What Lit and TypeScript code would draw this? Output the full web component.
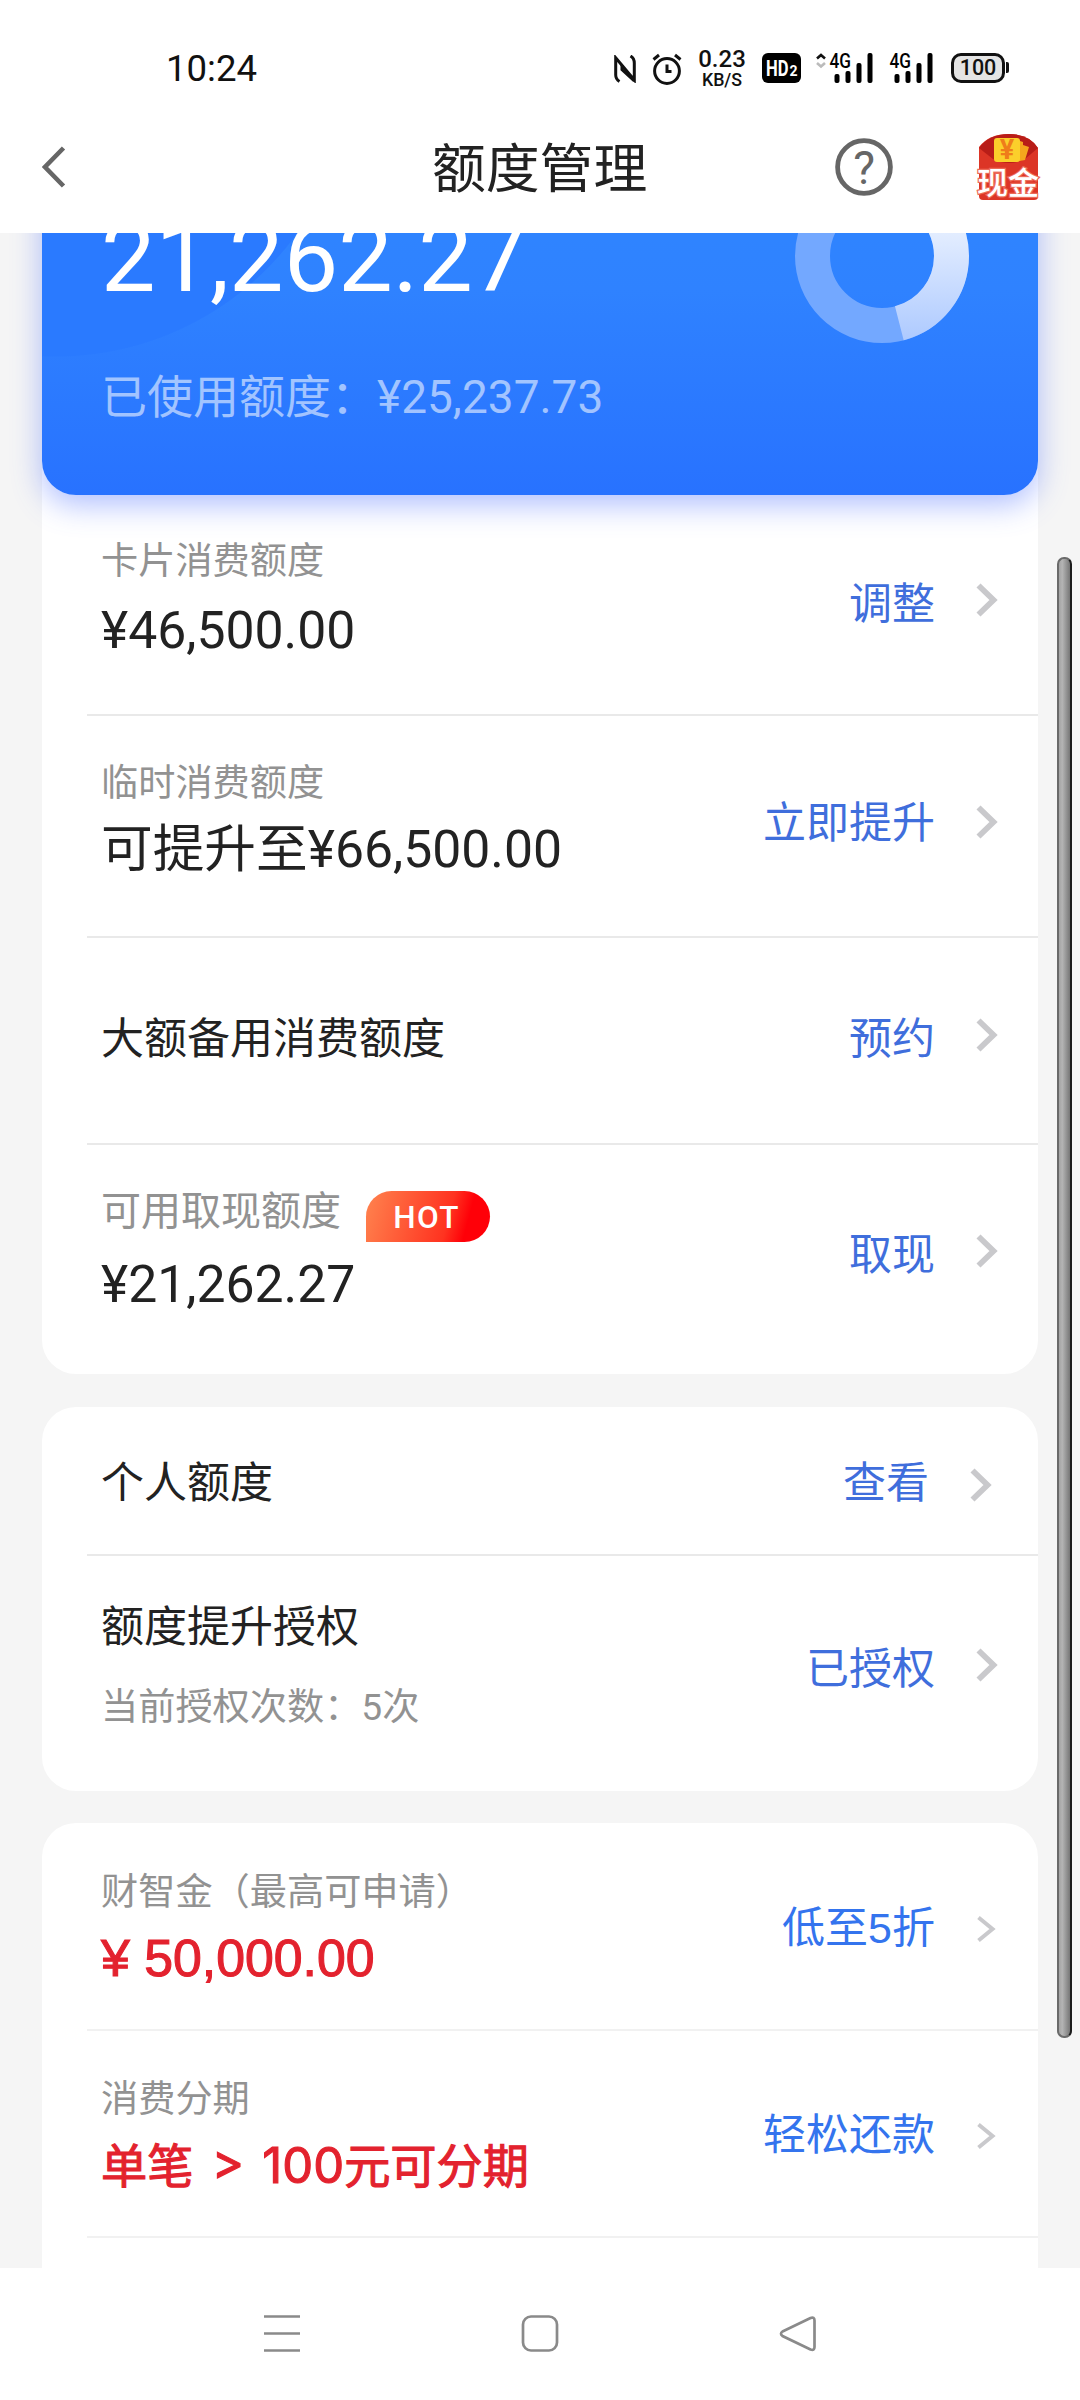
import { LitElement, html, css, svg, nothing } from "lit";
import { customElement, property } from "lit/decorators.js";
import { classMap } from "lit/directives/class-map.js";

interface LimitRow {
    kind: string;
    label?: string;
    hot?: boolean;
    title?: string;
    value?: string;
    note?: string;
    promo?: unknown;
    action: string;
    thin?: boolean;
}

const cardRows: LimitRow[] = [
    { kind: "card-limit", label: "卡片消费额度", value: "¥46,500.00", action: "调整" },
    { kind: "temp-limit", label: "临时消费额度", value: "可提升至¥66,500.00", action: "立即提升" },
    { kind: "reserve-limit", title: "大额备用消费额度", action: "预约" },
    { kind: "cash-limit", label: "可用取现额度", hot: true, value: "¥21,262.27", action: "取现" },
];

const personalRows: LimitRow[] = [
    { kind: "personal", title: "个人额度", action: "查看" },
    { kind: "grant", title: "额度提升授权", note: "当前授权次数：5次", action: "已授权" },
];

const promoRows: LimitRow[] = [
    {
        kind: "cash-loan",
        label: "财智金（最高可申请）",
        promo: html`<span class="amount">¥ 50,000.00</span>`,
        action: "低至5折",
        thin: true,
    },
    {
        kind: "instalment",
        label: "消费分期",
        promo: html`<span class="mixed">单笔<span class="latin"> &gt; 100</span>元可分期</span>`,
        action: "轻松还款",
        thin: true,
    },
];

@customElement("status-bar")
export class StatusBar extends LitElement {
    signal(arrows: boolean) {
        return html`<svg class=${arrows ? "signal wide" : "signal"} viewBox=${arrows ? "0 0 58 32" : "14 0 44 32"}>
            ${arrows
                ? svg`<path d="M2 6.5L6 3L10 6.5" fill="none" stroke="#111" stroke-width="2.6"/>
                    <path d="M2 11L6 14.5L10 11" fill="none" stroke="#bbb" stroke-width="2.6"/>`
                : nothing}
            <text x="14.500" y="15.500" textLength="21.500" lengthAdjust="spacingAndGlyphs">4G</text>
            <rect x="19.500" y="22" width="5" height="9" rx="2" />
            <rect x="30.500" y="19" width="5" height="12" rx="2" />
            <rect x="41.500" y="11" width="5" height="20" rx="2" />
            <rect x="52.500" y="1" width="5" height="30" rx="2" />
        </svg>`;
    }

    render() {
        return html`
            <span class="time">10:24</span>
            <div class="icons">
                <svg class="nfc" viewBox="0 0 22 28">
                    <path d="M5.500 26.500C3 25 1.700 23 1.700 20V2.800L20.300 25V8C20.300 5 19 2.500 16.500 1" />
                    <path d="M8 10V14.500L20.300 26" />
                </svg>
                <svg class="alarm" viewBox="0 0 30 32">
                    <circle cx="15" cy="18" r="12.400" />
                    <path d="M1.500 6.500L7 2M28.500 6.500L23 2M15 11.500V18.500H19.500" />
                </svg>
                <div class="speed">
                    <span class="rate">0.23</span>
                    <span class="unit">KB/S</span>
                </div>
                <svg class="hd" viewBox="0 0 39 30">
                    <rect width="39" height="30" rx="6" />
                    <text x="4" y="23" class="big" textLength="22.500" lengthAdjust="spacingAndGlyphs">HD</text>
                    <text x="27.500" y="23" class="two">2</text>
                </svg>
                ${this.signal(true)} ${this.signal(false)}
                <div class="battery"><span class="level">100</span></div>
                <div class="nub"></div>
            </div>
        `;
    }

    static styles = css`
        :host {
            display: flex;
            height: 96px;
            align-items: flex-start;
            background: #fff;
            color: #111;
            font-family: Roboto, "Noto Sans CJK SC", sans-serif;
        }

        .time {
            margin: 48px 0 0 166px;
            width: 448px;
            font-size: 36.6px;
            line-height: 42px;
        }

        .icons {
            display: flex;
            align-items: flex-start;
            padding-top: 52px;
        }

        .nfc {
            width: 22px;
            height: 28px;
            margin-top: 3px;
        }

        .nfc path,
        .alarm path,
        .alarm circle {
            fill: none;
            stroke: #111;
            stroke-width: 3;
        }

        .alarm {
            width: 30px;
            height: 32px;
            margin: 1px 0 0 16px;
        }

        .speed {
            display: flex;
            flex-direction: column;
            align-items: center;
            width: 50px;
            margin: -7px 0 0 15px;
            font-weight: 500;
        }

        .rate {
            font-size: 24px;
            line-height: 28px;
        }

        .unit {
            margin-top: -3px;
            font-size: 17.8px;
            line-height: 20px;
        }

        .hd {
            width: 39px;
            height: 30px;
            margin: 1px 0 0 15px;
        }

        .hd text {
            fill: #fff;
            font-weight: 700;
        }

        .hd .big {
            font-size: 22.5px;
        }

        .hd .two {
            font-size: 14px;
        }

        .signal {
            width: 44px;
            height: 32px;
            margin-left: 16px;
            fill: #000;
            overflow: visible;
        }

        .signal.wide {
            width: 58px;
            margin-left: 14px;
        }

        .signal text {
            font-size: 20.5px;
            font-weight: 500;
        }

        .battery {
            box-sizing: border-box;
            width: 54px;
            height: 30px;
            margin: 1px 0 0 18px;
            border: 3px solid #111;
            border-radius: 10px;
            background: #e4e4e4;
            text-align: center;
        }

        .level {
            display: block;
            font-size: 21.5px;
            font-weight: 500;
            line-height: 24px;
        }

        .nub {
            width: 3px;
            height: 11px;
            margin: 10px 0 0 1px;
            border-radius: 0 2px 2px 0;
            background: #111;
        }
    `;
}

@customElement("title-bar")
export class TitleBar extends LitElement {
    render() {
        return html`
            <svg class="back" viewBox="0 0 24 42">
                <path d="M21.500 2L3 21L21.500 40" />
            </svg>
            <h1 class="title">额度管理</h1>
            <svg class="help" viewBox="0 0 58 58">
                <circle cx="29" cy="29" r="26.400" />
                <text x="29" y="45.500">?</text>
            </svg>
            <svg class="packet" viewBox="0 0 66 68">
                <path d="M4 14Q14 1 34 1T63 15V64Q63 67 59 67H8Q4 67 4 63Z" fill="#dc3526" />
                <path d="M4 15Q14 1 34 1T63 15L50 26Q34 34 18 26Z" fill="#b81d18" />
                <path d="M42 7L48 9V12L54 14L50 27L40 29Z" fill="#f5a51d" />
                <rect x="19" y="5" width="26" height="24" rx="3" fill="#fbcf2b" />
                <text class="yen" x="32" y="26">¥</text>
                <text class="cash" x="33" y="60.500">现金</text>
            </svg>
        `;
    }

    static styles = css`
        :host {
            display: grid;
            grid-template-columns: 42px 24px 1fr 58px 82px 66px 39px;
            height: 137px;
            background: #fff;
            font-family: Roboto, "Noto Sans CJK SC", sans-serif;
        }

        .back {
            grid-column: 2;
            width: 24px;
            height: 42px;
            margin-top: 50px;
            fill: none;
            stroke: #666;
            stroke-width: 4.6;
        }

        .title {
            margin: 0;
            padding: 39px 0 0 366px;
            color: #222;
            font-size: 53.8px;
            font-weight: 400;
            line-height: 70px;
            white-space: nowrap;
        }

        .help {
            width: 58px;
            height: 58px;
            margin-top: 42px;
        }

        .help circle {
            fill: none;
            stroke: #666;
            stroke-width: 4.8;
        }

        .help text {
            fill: #666;
            font-size: 46px;
            text-anchor: middle;
        }

        .packet {
            grid-column: 6;
            width: 66px;
            height: 68px;
            margin-top: 37px;
            overflow: visible;
        }

        .yen {
            fill: #ef7d1a;
            font-size: 27px;
            font-weight: 700;
            text-anchor: middle;
        }

        .cash {
            fill: #fff;
            stroke: #ec6a58;
            stroke-width: 2.5;
            paint-order: stroke;
            font-family: "Noto Sans CJK SC", sans-serif;
            font-size: 31px;
            font-weight: 500;
            text-anchor: middle;
        }
    `;
}

@customElement("limit-hero")
export class LimitHero extends LitElement {
    @property() available = "21,262.27";
    @property() used = "¥25,237.73";
    @property({ type: Number }) ratio = 0.459;

    render() {
        const length = 2 * Math.PI * 69.5;
        return html`
            <div class="figures">
                <span class="available">${this.available}</span>
                <span class="used">已使用额度：${this.used}</span>
            </div>
            <svg class="donut" viewBox="0 0 174 174">
                <defs>
                    <!-- the arc is rotated, so the x axis runs bottom to top -->
                    <linearGradient id="free" gradientUnits="userSpaceOnUse" x1="0" y1="0" x2="174" y2="0">
                        <stop offset="0" stop-color="#acc9ff" />
                        <stop offset="0.600" stop-color="#e0ebff" />
                        <stop offset="1" stop-color="#fff" />
                    </linearGradient>
                </defs>
                <circle cx="87" cy="87" r="69.500" stroke="#73a8ff" />
                <circle
                    cx="87"
                    cy="87"
                    r="69.500"
                    stroke="url(#free)"
                    stroke-dasharray="${length * this.ratio} ${length}"
                    transform="rotate(-90 87 87)"
                />
            </svg>
        `;
    }

    static styles = css`
        :host {
            display: flex;
            justify-content: space-between;
            box-sizing: border-box;
            height: 342px;
            padding: 15px 69px 0 59px;
            border-radius: 0 0 34px 34px;
            background:
                radial-gradient(circle 298px at 14px -94px, #2a7aff 297px, transparent 298px),
                linear-gradient(#2f86ff, #2f82ff 40%, #2872ff);
            box-shadow: 0 10px 30px rgba(70, 105, 255, 0.42);
        }

        .figures {
            display: flex;
            flex-direction: column;
            color: #fff;
            white-space: nowrap;
        }

        .available {
            font-size: 97px;
            line-height: 110px;
            margin-top: 35px;
        }

        .used {
            margin-top: 54px;
            color: rgba(255, 255, 255, 0.56);
            font-size: 46px;
            line-height: 60px;
        }

        .donut {
            width: 174px;
            height: 174px;
            margin-top: 1px;
            fill: none;
            stroke-width: 35;
        }
    `;
}

@customElement("limit-row")
export class LimitRowElement extends LitElement {
    @property({ attribute: false }) row!: LimitRow;

    render() {
        const { kind, label, hot, title, value, note, promo, action, thin } = this.row;
        return html`
            <div class=${classMap({ row: true, [kind]: true })}>
                <div class="info">
                    ${label
                        ? html`<div class="heading">
                              <span class="label">${label}</span>
                              ${hot ? html`<span class="hot">HOT</span>` : nothing}
                          </div>`
                        : nothing}
                    ${title ? html`<span class="title">${title}</span>` : nothing}
                    ${value ? html`<span class="value">${value}</span>` : nothing}
                    ${promo ? html`<span class="promo">${promo}</span>` : nothing}
                    ${note ? html`<span class="note">${note}</span>` : nothing}
                </div>
                <div class="action">
                    <span class=${thin ? "link bright" : "link"}>${action}</span>
                    ${thin
                        ? html`<svg class="chevron thin" viewBox="0 0 22 34">
                              <path d="M2.500 5.500L16.500 17L2.500 28.500" />
                          </svg>`
                        : html`<svg class="chevron" viewBox="0 0 22 34">
                              <path d="M2.500 2.500L17.500 17L2.500 31.500" />
                          </svg>`}
                </div>
            </div>
        `;
    }

    static styles = css`
        :host {
            display: block;
        }

        :host(:not([last])) .row {
            border-bottom: 2px solid var(--line, #e9e9e9);
        }

        .row {
            display: flex;
            justify-content: space-between;
            box-sizing: border-box;
            height: var(--height);
            margin-left: 45px;
            padding: 0 40px 0 14px;
            white-space: nowrap;
        }

        .info {
            display: flex;
            flex-direction: column;
            align-items: flex-start;
            gap: var(--gap);
            padding-top: var(--top);
        }

        .card-limit {
            --height: 221px;
            --top: 44px;
            --gap: 18px;
            --action: 79px;
            --chevron: -9px;
        }

        .temp-limit {
            --height: 222px;
            --top: 45px;
            --gap: 15px;
            --action: 77px;
            --chevron: -2px;
        }

        .reserve-limit {
            --height: 207px;
            --top: 76px;
            --action: 71px;
            --chevron: -8px;
        }

        .cash-limit {
            --height: 229px;
            --top: 45px;
            --gap: 21px;
            --action: 80px;
            --chevron: -8px;
        }

        .personal {
            --height: 149px;
            --top: 51px;
            --action: 46px;
            --chevron: 4px;
            padding-right: 46px;
        }

        .grant {
            --height: 235px;
            --top: 46px;
            --gap: 33px;
            --action: 83px;
            --chevron: -8px;
        }

        .cash-loan {
            --height: 208px;
            --top: 47px;
            --gap: 14px;
            --action: 75px;
            --chevron: 2px;
            --line: #f1f1f1;
        }

        .instalment {
            --height: 207px;
            --top: 46px;
            --gap: 15px;
            --action: 74px;
            --chevron: 2px;
            --line: #f1f1f1;
        }

        .heading {
            display: flex;
            height: 44px;
        }

        .label,
        .note {
            color: #929292;
            font-size: 37.2px;
            line-height: 44px;
        }

        .cash-limit .label {
            font-size: 40px;
        }

        .hot {
            box-sizing: border-box;
            width: 124px;
            height: 51px;
            margin: 1px 0 0 25px;
            padding-right: 3px;
            border-radius: 26px 26px 26px 0;
            background: linear-gradient(105deg, #ff7d4b 5%, #ff3320 65%, #ff0008 80%);
            color: #fff;
            font-size: 31.5px;
            font-weight: 500;
            line-height: 53px;
            letter-spacing: 1.3px;
            text-align: center;
        }

        .title {
            color: #222;
            font-size: 43px;
            line-height: 50px;
        }

        .value {
            color: #222;
            font-size: 51.7px;
            line-height: 60px;
        }

        .promo {
            color: #e3222e;
            line-height: 60px;
            -webkit-text-stroke: 1.1px #e3222e;
        }

        .amount {
            display: block;
            font-family: "Liberation Sans", sans-serif;
            font-size: 51.8px;
        }

        .mixed {
            display: block;
            font-family: Inter, "Noto Sans CJK SC", sans-serif;
            font-size: 46.2px;
        }

        .latin {
            font-size: 49px;
            word-spacing: 4.5px;
        }

        .action {
            display: flex;
            align-items: center;
            gap: 41px;
            height: 60px;
            padding-top: var(--action);
        }

        .link {
            color: #3f6edc;
            font-size: 43px;
            line-height: 60px;
        }

        .bright {
            color: #3474ee;
            font-family: "Liberation Sans", "Noto Sans CJK SC", sans-serif;
        }

        .chevron {
            width: 22px;
            height: 34px;
            margin-top: var(--chevron);
            fill: none;
            stroke: #c9c9cc;
            stroke-width: 5.8;
        }

        .thin {
            stroke-width: 4;
        }
    `;
}

@customElement("nav-bar")
export class NavBar extends LitElement {
    render() {
        return html`
            <svg viewBox="0 0 40 40"><path d="M2 3.500H38M2 20.500H38M2 37.500H38" /></svg>
            <svg viewBox="0 0 40 40"><rect x="3" y="3.500" width="34" height="34" rx="8" /></svg>
            <svg viewBox="0 0 40 40">
                <path d="M4.500 18.500L32.500 5Q36.500 3.500 36.500 7.500V34Q36.500 38 32.500 36.500L4.500 23Q1.500 20.500 4.500 18.500Z" />
            </svg>
        `;
    }

    static styles = css`
        :host {
            display: flex;
            justify-content: space-between;
            box-sizing: border-box;
            height: 132px;
            padding: 45px 262px 0;
            background: #fff;
        }

        svg {
            width: 40px;
            height: 40px;
            fill: none;
            stroke: #8a8a8a;
            stroke-width: 2.7;
        }
    `;
}

@customElement("app-root")
export class AppRoot extends LitElement {
    rows(rows: LimitRow[], open = false) {
        return rows.map(
            (row, i) => html`<limit-row .row=${row} ?last=${!open && i === rows.length - 1}></limit-row>`
        );
    }

    render() {
        return html`
            <status-bar></status-bar>
            <title-bar></title-bar>
            <main class="content">
                <section class="card first">
                    <limit-hero></limit-hero>
                    ${this.rows(cardRows)}
                </section>
                <section class="card">${this.rows(personalRows)}</section>
                <section class="card rest">${this.rows(promoRows, true)}</section>
                <div class="scrollbar"></div>
            </main>
            <nav-bar></nav-bar>
        `;
    }

    static styles = css`
        :host {
            display: flex;
            flex-direction: column;
            width: 1080px;
            height: 2400px;
            overflow: hidden;
            background: #fff;
            font-family: Roboto, "Noto Sans CJK SC", sans-serif;
        }

        .content {
            position: relative;
            display: flex;
            flex-direction: column;
            gap: 33px;
            box-sizing: border-box;
            height: 2035px;
            padding: 0 42px;
            overflow: hidden;
            background: #f5f5f5;
        }

        .card {
            flex: none;
            border-radius: 34px;
            background: #fff;
        }

        .card.first {
            margin-top: -80px;
        }

        .card.rest {
            height: 480px;
            margin-top: -1px;
        }

        .scrollbar {
            position: absolute;
            top: 324px;
            right: 8px;
            box-sizing: border-box;
            width: 15px;
            height: 1481px;
            border: 2px solid #6a6a6a;
            border-right-color: #1c1c1c;
            border-radius: 7px;
            background: linear-gradient(90deg, #a4a4a4, #b4b4b4 30%, #777);
        }
    `;
}
